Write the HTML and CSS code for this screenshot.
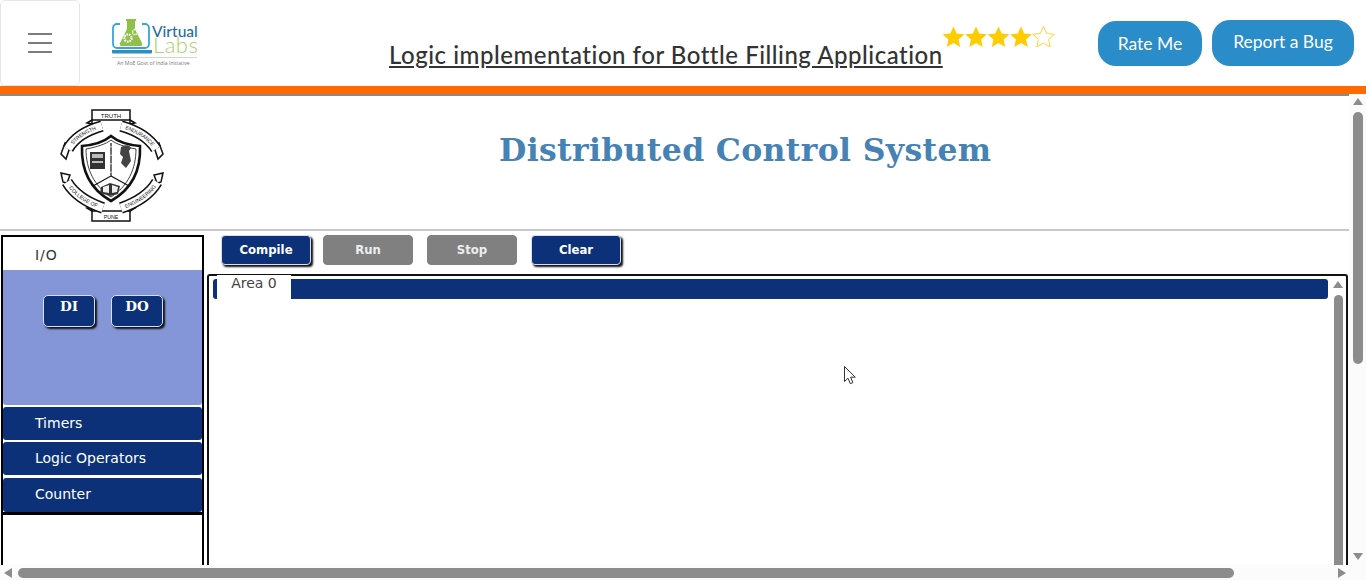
FILE: index.html
```html
<!DOCTYPE html>
<html lang="en">
<head>
<meta charset="utf-8">
<title>Logic implementation for Bottle Filling Application</title>
<link rel="stylesheet" href="styles.css">
</head>
<body>
<header class="topbar">
  <button class="menu-btn" aria-label="Menu"><span></span><span></span><span></span></button>
  <svg class="vlab-logo" viewBox="0 0 90 52" width="90" height="52">
    <path d="M9 6H6a4 4 0 0 0-4 4v16a4 4 0 0 0 4 4h28a4 4 0 0 0 4-4V10a4 4 0 0 0-4-4h-3" fill="none" stroke="#3ba4d8" stroke-width="1.800"/>
    <path d="M15 1h10v2h-1v8l7 14a2 2 0 0 1-2 3H11a2 2 0 0 1-2-3l7-14V3h-1z" fill="#8fc04a"/>
    <circle cx="17" cy="20" r="3.600" fill="none" stroke="#fff" stroke-width="2.200" stroke-dasharray="1.600 .9"/>
    <circle cx="24" cy="14" r="2.500" fill="none" stroke="#fff" stroke-width="1.500" stroke-dasharray="1.300 .7"/>
    <path d="M1 32h40v2.500a1 1 0 0 1-1 1H2a1 1 0 0 1-1-1z" fill="#2f8fc4"/>
    <text x="41" y="19" class="logo-virtual">Virtual</text>
    <text x="42" y="35" class="logo-labs">Labs</text>
    <path d="M1 39.500h85" stroke="#c9c9c9" stroke-width=".8"/>
    <text x="6" y="47" class="logo-tag">An MoE Govt of India Initiative</text>
  </svg>
  <h1 class="exp-title">Logic implementation for Bottle Filling Application</h1>
  <div class="stars">
    <svg viewBox="0 0 114 24" width="117" height="24">
      <path d="M12 1.500l3.200 7 7.600.8-5.700 5.100 1.600 7.500L12 18.100l-6.700 3.800 1.600-7.500L1.200 9.300l7.600-.8z" fill="#ffcc00"/>
      <path d="M34.500 1.500l3.200 7 7.600.8-5.700 5.100 1.600 7.500-6.700-3.800-6.700 3.800 1.600-7.500-5.700-5.100 7.600-.8z" fill="#ffcc00"/>
      <path d="M57 1.500l3.200 7 7.600.8-5.700 5.100 1.600 7.500L57 18.100l-6.700 3.800 1.600-7.500-5.700-5.100 7.600-.8z" fill="#ffcc00"/>
      <path d="M79.500 1.500l3.200 7 7.600.8-5.700 5.100 1.600 7.500-6.700-3.800-6.700 3.800 1.600-7.500-5.700-5.100 7.600-.8z" fill="#ffcc00"/>
      <path d="M102 1.500l3.200 7 7.600.8-5.700 5.100 1.600 7.500-6.700-3.800-6.700 3.800 1.600-7.500-5.700-5.100 7.600-.8z" fill="none" stroke="#ffd23c" stroke-width="1"/>
    </svg>
  </div>
  <a class="pill pill-rate">Rate Me</a>
  <a class="pill pill-bug">Report a Bug</a>
</header>
<div class="orange-bar"></div>
<div class="viewport">
  <div class="view-row">
    <main class="page">
      <section class="banner">
        <svg class="crest" viewBox="0 0 106 118" width="106" height="118">
          <defs>
            <path id="r1" d="M9 42Q18 26 43 19"/>
            <path id="r2" d="M62 19Q87 26 97 42"/>
            <path id="r3" d="M8 75Q18 92 44 101"/>
            <path id="r4" d="M62 101Q88 92 98 75"/>
          </defs>
          <g fill="#fff" stroke="#111" stroke-width="1.500">
            <path d="M2 47l4-11 5 4-4 12z"/>
            <path d="M104 47l-4-11-5 4 4 12z"/>
            <path d="M2 66l9 2-3 8-4-1z"/>
            <path d="M104 66l-9 2 3 8 4-1z"/>
            <path d="M33 3h38v10H33z"/>
            <path d="M33 104h38v10H33z"/>
            <path d="M33 13l-5 3 5 1zM71 13l5 3-5 1zM33 104l-5-3 5-1zM71 104l5-3-5-1z"/>
          </g>
          <g fill="none" stroke="#111" stroke-width="11.500">
            <use href="#r1"/><use href="#r2"/><use href="#r3"/><use href="#r4"/>
          </g>
          <g fill="none" stroke="#fff" stroke-width="8.400">
            <use href="#r1"/><use href="#r2"/><use href="#r3"/><use href="#r4"/>
          </g>
          <text x="52" y="10.500" class="crest-t">TRUTH</text>
          <text class="crest-t small" dy="1.800"><textPath href="#r1" startOffset="50%">STRENGTH</textPath></text>
          <text class="crest-t small" dy="1.800"><textPath href="#r2" startOffset="50%">ENDURANCE</textPath></text>
          <text class="crest-t small" dy="1.800"><textPath href="#r3" startOffset="50%">COLLEGE OF</textPath></text>
          <text class="crest-t small" dy="1.800"><textPath href="#r4" startOffset="50%">ENGINEERING</textPath></text>
          <text x="52" y="111.500" class="crest-t small">PUNE</text>
          <path d="M52 29c6 5 17 9 29 10 1 24-8 43-29 55-21-12-30-31-29-55 12-1 23-5 29-10z" fill="#fff" stroke="#111" stroke-width="2.600"/>
          <path d="M52 33c5 4 14 7 25 9 0 20-8 37-25 48-17-11-25-28-25-48 11-2 20-5 25-9z" fill="none" stroke="#111" stroke-width=".8"/>
          <path d="M52 36v33l-18 10M52 69l18 10" fill="none" stroke="#111" stroke-width="1.200"/>
          <path d="M52 39v28" fill="none" stroke="#fff" stroke-width="1" stroke-dasharray="1.500 7"/>
          <path d="M31 45h15v17H31z" fill="#333"/>
          <path d="M33 47h11v4H33zM33 54h11v2H33z" fill="#bbb"/>
          <path d="M62 40c5-3 9-2 10 1l-2 3 2 10-5 7-5-5 2-6-3-3z" fill="#444"/>
          <path d="M42 80l9-4 10 3-2 8-8 2-10-3z" fill="#333"/>
          <path d="M44 80l6-2v8l-6-1zM53 78l6 2-1 5-5 1z" fill="#eee"/>
        </svg>
        <h2 class="dcs-title">Distributed Control System</h2>
      </section>
      <div class="rule"></div>
      <section class="workspace">
        <aside class="palette">
          <div class="acc-box">
            <div class="acc-head">I/O</div>
            <div class="acc-body">
              <button class="tool-btn">DI</button>
              <button class="tool-btn">DO</button>
            </div>
            <div class="acc-item">Timers</div>
            <div class="acc-item">Logic Operators</div>
            <div class="acc-item">Counter</div>
          </div>
        </aside>
        <div class="editor">
          <div class="toolbar">
            <button class="act-btn">Compile</button>
            <button class="act-btn off">Run</button>
            <button class="act-btn off">Stop</button>
            <button class="act-btn">Clear</button>
          </div>
          <div class="canvas">
            <div class="canvas-main">
              <div class="tabs"><div class="tab">Area 0</div></div>
            </div>
            <div class="inner-bar">
              <i class="tri up"></i>
              <div class="inner-thumb"></div>
            </div>
          </div>
        </div>
      </section>
    </main>
    <div class="v-bar">
      <i class="tri up"></i>
      <div class="v-thumb"></div>
      <div class="v-fill"></div>
      <i class="tri down"></i>
    </div>
  </div>
  <div class="h-bar">
    <i class="tri left"></i>
    <div class="h-thumb"></div>
    <i class="tri right"></i>
  </div>
</div>
<svg class="cursor" viewBox="0 0 12 19" width="12" height="19"><path d="M.5.5v15l3.500-3.300 2.300 5.500 2.600-1.100-2.300-5.400h4.700z" fill="#fff" stroke="#333" stroke-width="1"/></svg>
</body>
</html>
```
FILE: styles.css
```css
* { box-sizing: border-box; }
html, body { margin: 0; height: 580px; overflow: hidden; background: #fff; }
body { display: flex; flex-direction: column; font-family: "DejaVu Sans", sans-serif; }

.topbar { height: 86px; display: flex; align-items: flex-start; flex: none; position: relative; }
.menu-btn { width: 80px; height: 86px; background: #fff; border: 1px solid #e6e6e6; border-radius: 5px; display: flex; flex-direction: column; justify-content: center; align-items: center; gap: 7px; padding: 0; margin: 0; flex: none; }
.menu-btn span { display: block; width: 24px; height: 2px; background: #7c7c7c; }
.vlab-logo { margin: 18px 0 0 31px; flex: none; }
.logo-virtual { font: 500 15.500px Lato, sans-serif; fill: #1f6d9f; }
.logo-labs { font: 300 22px Lato, sans-serif; fill: #a9cf6d; letter-spacing: .5px; }
.logo-tag { font: 400 5.200px "Open Sans", sans-serif; fill: #777; }
.exp-title { margin: 39px 0 0 188px; font: 500 24px/32px Lato, sans-serif; color: #333; text-decoration: underline; white-space: nowrap; width: 553px; flex: none; letter-spacing: .52px; }
.stars { margin: 25px 0 0 -2px; width: 117px; height: 24px; flex: none; }
.stars svg { display: block; }
.pill { background: #2a8cc8; color: #fff; font: 400 17.500px Lato, sans-serif; display: flex; align-items: center; justify-content: center; flex: none; padding-bottom: 2px; }
.pill-rate { width: 104px; height: 45px; margin: 21px 0 0 41px; border-radius: 18px; padding-bottom: 1px; }
.pill-bug { width: 142px; height: 46px; margin: 20px 0 0 10px; border-radius: 18px; padding-bottom: 3px; }

.orange-bar { height: 10px; flex: none; background: #ff6a00; border-bottom: 2px solid #8a8a8a; }

.viewport { flex: 1; min-height: 0; display: flex; flex-direction: column; }
.view-row { flex: 1; min-height: 0; display: flex; }
.page { flex: 1; min-width: 0; display: flex; flex-direction: column; overflow: hidden; }
.banner { height: 133px; flex: none; display: flex; }
.crest { margin: 11px 0 0 59px; flex: none; }
.dcs-title { margin: 33px 0 0 334px; font: 700 31.500px/42px "DejaVu Serif", serif; color: #4682b4; white-space: nowrap; letter-spacing: .35px; }
.crest-t { font: 400 6px "Liberation Sans", sans-serif; text-anchor: middle; fill: #111; }
.crest-t.small { font-size: 5.300px; }
.rule { height: 2px; flex: none; background: #c8c8c8; }

.workspace { flex: 1; min-height: 0; display: flex; padding: 4px 0 0 1px; }
.palette { width: 203px; flex: none; border: solid #000; border-width: 2px 2px 0 2px; align-self: stretch; }
.acc-box { border-bottom: 3px solid #000; margin: 1px 0 0 0; }
.acc-head { height: 32px; background: #fff; color: #333; font: 400 14px/34px "DejaVu Sans", sans-serif; letter-spacing: .9px; padding-left: 32px; }
.acc-body { height: 135px; background: #8496d8; border-radius: 0 0 3px 3px; display: flex; align-items: flex-start; gap: 16px; padding: 25px 0 0 40px; }
.acc-item { height: 33px; margin-top: 2px; background: #0d3179; border-radius: 3px; color: #fff; font: 400 14px/33px "DejaVu Sans", sans-serif; padding-left: 32px; }
.acc-item:last-child { margin-top: 3px; height: 34px; }
.tool-btn { width: 52px; height: 32px; padding: 0 0 11px; background: #0d3179; color: #fff; border: 1px solid #d8def0; border-radius: 5px; font: 700 13.500px "DejaVu Serif", serif; box-shadow: 2px 2px 2px #111; }

.editor { flex: 1; min-width: 0; display: flex; flex-direction: column; margin-left: 3px; }
.toolbar { height: 39px; flex: none; display: flex; padding-left: 14px; gap: 12px; }
.act-btn { width: 90px; height: 30px; padding: 0 0 1px; background: #0d3179; color: #fff; border: 1px solid #d8def0; border-radius: 4px; font: 700 13px "DejaVu Sans", sans-serif; font-stretch: condensed; box-shadow: 2px 2px 2px #111; }
.act-btn.off { background: #808080; border-color: #808080; box-shadow: none; color: #eee; }
.act-btn.off + .act-btn { margin-left: 2px; }
.canvas { flex: 1; min-height: 0; border: solid #111; border-width: 2px 2px 0 2px; border-radius: 3px 3px 0 0; margin-right: 1px; display: flex; }
.canvas-main { flex: 1; min-width: 0; padding: 3px 0 0 4px; }
.tabs { height: 20px; background: #0d3179; border-radius: 3px; padding-left: 4px; display: flow-root; }
.tab { width: 74px; height: 24px; margin-top: -4px; background: #fff; color: #444; font: 400 14px/16px "DejaVu Sans", sans-serif; text-align: center; }
.inner-bar { width: 18px; flex: none; display: flex; flex-direction: column; align-items: center; padding: 5px 0 0 2px; gap: 7px; }
.inner-thumb { width: 9px; flex: 1; background: #8c8c8c; border-radius: 5px 5px 0 0; }

.v-bar { width: 17px; flex: none; background: #fbfbfb; display: flex; flex-direction: column; align-items: center; margin-top: -2px; padding: 4px 0 5px; }
.v-thumb { width: 10px; height: 252px; margin-top: 7px; background: #8c8c8c; border-radius: 5px; }
.v-fill { flex: 1; }
.h-bar { height: 15px; flex: none; background: #fbfbfb; display: flex; align-items: center; padding: 0 20px 0 4px; }
.h-thumb { width: 1216px; height: 10px; margin-left: 6px; background: #8c8c8c; border-radius: 5px; }
.h-bar .right { margin-left: auto; }

.tri { display: block; width: 0; height: 0; flex: none; border-style: solid; }
.tri.up { border-width: 0 5px 7px; border-color: transparent transparent #8c8c8c; }
.tri.down { border-width: 7px 5px 0; border-color: #8c8c8c transparent transparent; }
.tri.left { border-width: 5px 8px 5px 0; border-color: transparent #8c8c8c transparent transparent; }
.tri.right { border-width: 5px 0 5px 8px; border-color: transparent transparent transparent #8c8c8c; }

.cursor { position: absolute; left: 844px; top: 366px; }
```
